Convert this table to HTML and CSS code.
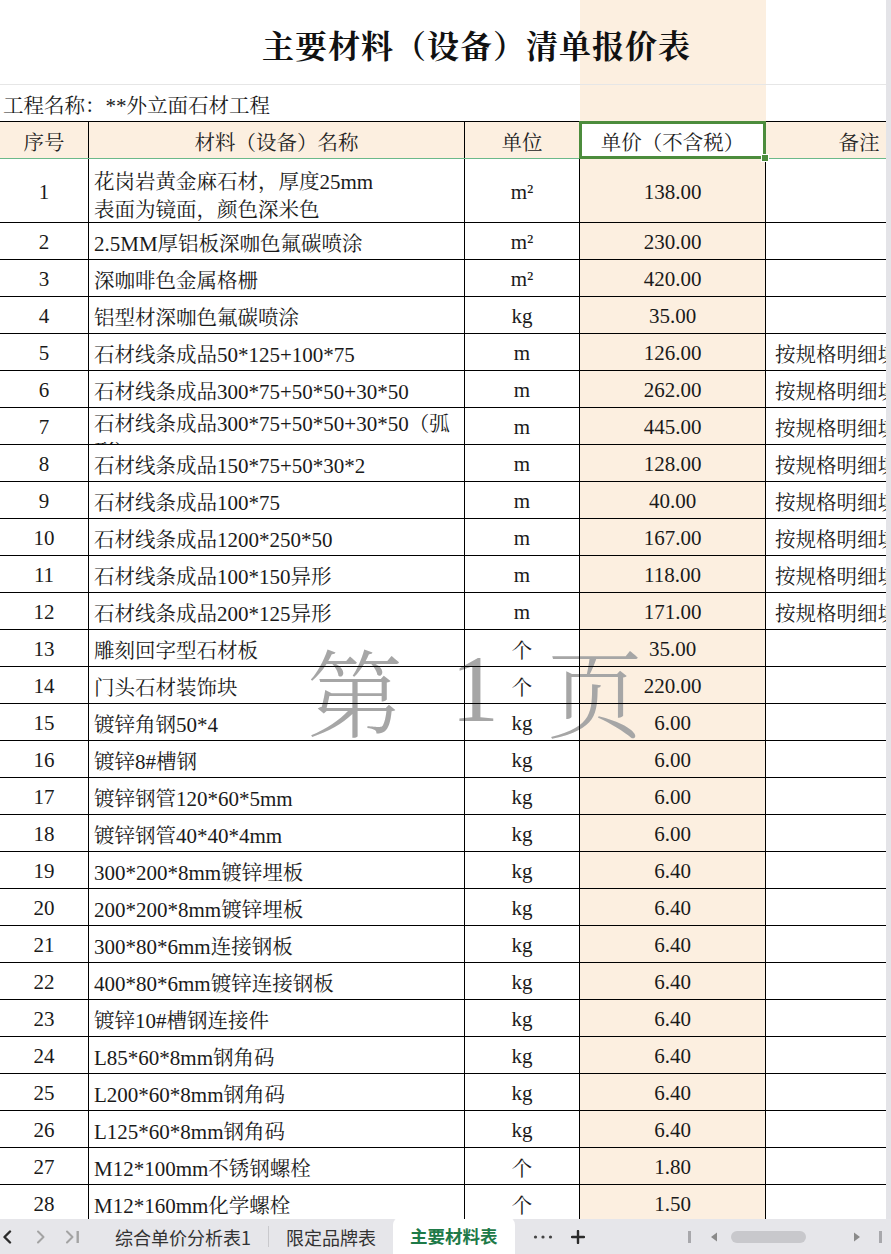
FILE: index.html
```html
<!DOCTYPE html>
<html lang="zh-CN">
<head>
<meta charset="utf-8">
<title>主要材料（设备）清单报价表</title>
<link rel="stylesheet" href="styles.css">
</head>
<body>
<div class="app">
  <div class="sheet">
    <div class="content">
      <div class="wm"><span>第</span><span class="wm-n">1</span><span>页</span></div>
      <div class="title-row"><h1 class="title">主要材料（设备）清单报价表</h1></div>
      <div class="proj">工程名称：<span class="l">**</span>外立面石材工程</div>
      <div class="grid">
        <div class="row head">
          <div class="c c1">序号</div>
          <div class="c c2 ctr">材料（设备）名称</div>
          <div class="c c3">单位</div>
          <div class="c c4 selcell">单价（不含税）<span class="sel"><span class="handle"></span></span></div>
          <div class="c c5">备注</div>
        </div>
        <div class="row tall">
          <div class="c c1 l">1</div>
          <div class="c c2 wrap">花岗岩黄金麻石材，厚度<span class="l">25mm</span><br>表面为镜面，颜色深米色</div>
          <div class="c c3 l">m²</div>
          <div class="c c4 l">138.00</div>
          <div class="c c5"></div>
        </div>
        <div class="row"><div class="c c1 l">2</div><div class="c c2"><span class="l">2.5MM</span>厚铝板深咖色氟碳喷涂</div><div class="c c3 l">m²</div><div class="c c4 l">230.00</div><div class="c c5"></div></div>
        <div class="row"><div class="c c1 l">3</div><div class="c c2">深咖啡色金属格栅</div><div class="c c3 l">m²</div><div class="c c4 l">420.00</div><div class="c c5"></div></div>
        <div class="row"><div class="c c1 l">4</div><div class="c c2">铝型材深咖色氟碳喷涂</div><div class="c c3 l">kg</div><div class="c c4 l">35.00</div><div class="c c5"></div></div>
        <div class="row"><div class="c c1 l">5</div><div class="c c2">石材线条成品<span class="l">50*125+100*75</span></div><div class="c c3 l">m</div><div class="c c4 l">126.00</div><div class="c c5 note">按规格明细填报</div></div>
        <div class="row"><div class="c c1 l">6</div><div class="c c2">石材线条成品<span class="l">300*75+50*50+30*50</span></div><div class="c c3 l">m</div><div class="c c4 l">262.00</div><div class="c c5 note">按规格明细填报</div></div>
        <div class="row"><div class="c c1 l">7</div><div class="c c2 over">石材线条成品<span class="l">300*75+50*50+30*50</span>（弧形）</div><div class="c c3 l">m</div><div class="c c4 l">445.00</div><div class="c c5 note">按规格明细填报</div></div>
        <div class="row"><div class="c c1 l">8</div><div class="c c2">石材线条成品<span class="l">150*75+50*30*2</span></div><div class="c c3 l">m</div><div class="c c4 l">128.00</div><div class="c c5 note">按规格明细填报</div></div>
        <div class="row"><div class="c c1 l">9</div><div class="c c2">石材线条成品<span class="l">100*75</span></div><div class="c c3 l">m</div><div class="c c4 l">40.00</div><div class="c c5 note">按规格明细填报</div></div>
        <div class="row"><div class="c c1 l">10</div><div class="c c2">石材线条成品<span class="l">1200*250*50</span></div><div class="c c3 l">m</div><div class="c c4 l">167.00</div><div class="c c5 note">按规格明细填报</div></div>
        <div class="row"><div class="c c1 l">11</div><div class="c c2">石材线条成品<span class="l">100*150</span>异形</div><div class="c c3 l">m</div><div class="c c4 l">118.00</div><div class="c c5 note">按规格明细填报</div></div>
        <div class="row"><div class="c c1 l">12</div><div class="c c2">石材线条成品<span class="l">200*125</span>异形</div><div class="c c3 l">m</div><div class="c c4 l">171.00</div><div class="c c5 note">按规格明细填报</div></div>
        <div class="row"><div class="c c1 l">13</div><div class="c c2">雕刻回字型石材板</div><div class="c c3">个</div><div class="c c4 l">35.00</div><div class="c c5"></div></div>
        <div class="row"><div class="c c1 l">14</div><div class="c c2">门头石材装饰块</div><div class="c c3">个</div><div class="c c4 l">220.00</div><div class="c c5"></div></div>
        <div class="row"><div class="c c1 l">15</div><div class="c c2">镀锌角钢<span class="l">50*4</span></div><div class="c c3 l">kg</div><div class="c c4 l">6.00</div><div class="c c5"></div></div>
        <div class="row"><div class="c c1 l">16</div><div class="c c2">镀锌<span class="l">8#</span>槽钢</div><div class="c c3 l">kg</div><div class="c c4 l">6.00</div><div class="c c5"></div></div>
        <div class="row"><div class="c c1 l">17</div><div class="c c2">镀锌钢管<span class="l">120*60*5mm</span></div><div class="c c3 l">kg</div><div class="c c4 l">6.00</div><div class="c c5"></div></div>
        <div class="row"><div class="c c1 l">18</div><div class="c c2">镀锌钢管<span class="l">40*40*4mm</span></div><div class="c c3 l">kg</div><div class="c c4 l">6.00</div><div class="c c5"></div></div>
        <div class="row"><div class="c c1 l">19</div><div class="c c2"><span class="l">300*200*8mm</span>镀锌埋板</div><div class="c c3 l">kg</div><div class="c c4 l">6.40</div><div class="c c5"></div></div>
        <div class="row"><div class="c c1 l">20</div><div class="c c2"><span class="l">200*200*8mm</span>镀锌埋板</div><div class="c c3 l">kg</div><div class="c c4 l">6.40</div><div class="c c5"></div></div>
        <div class="row"><div class="c c1 l">21</div><div class="c c2"><span class="l">300*80*6mm</span>连接钢板</div><div class="c c3 l">kg</div><div class="c c4 l">6.40</div><div class="c c5"></div></div>
        <div class="row"><div class="c c1 l">22</div><div class="c c2"><span class="l">400*80*6mm</span>镀锌连接钢板</div><div class="c c3 l">kg</div><div class="c c4 l">6.40</div><div class="c c5"></div></div>
        <div class="row"><div class="c c1 l">23</div><div class="c c2">镀锌<span class="l">10#</span>槽钢连接件</div><div class="c c3 l">kg</div><div class="c c4 l">6.40</div><div class="c c5"></div></div>
        <div class="row"><div class="c c1 l">24</div><div class="c c2"><span class="l">L85*60*8mm</span>钢角码</div><div class="c c3 l">kg</div><div class="c c4 l">6.40</div><div class="c c5"></div></div>
        <div class="row"><div class="c c1 l">25</div><div class="c c2"><span class="l">L200*60*8mm</span>钢角码</div><div class="c c3 l">kg</div><div class="c c4 l">6.40</div><div class="c c5"></div></div>
        <div class="row"><div class="c c1 l">26</div><div class="c c2"><span class="l">L125*60*8mm</span>钢角码</div><div class="c c3 l">kg</div><div class="c c4 l">6.40</div><div class="c c5"></div></div>
        <div class="row"><div class="c c1 l">27</div><div class="c c2"><span class="l">M12*100mm</span>不锈钢螺栓</div><div class="c c3">个</div><div class="c c4 l">1.80</div><div class="c c5"></div></div>
        <div class="row"><div class="c c1 l">28</div><div class="c c2"><span class="l">M12*160mm</span>化学螺栓</div><div class="c c3">个</div><div class="c c4 l">1.50</div><div class="c c5"></div></div>
      </div>
    </div>
    <div class="vstrip"></div>
  </div>
  <div class="tabs">
    <div class="nav">
      <svg class="ic ic-prev" width="10" height="14" viewBox="0 0 10 14"><path d="M8 1.5 L2.5 7 L8 12.5" fill="none" stroke="#2b2b2b" stroke-width="2.4" stroke-linecap="round" stroke-linejoin="round"/></svg>
      <svg class="ic ic-next" width="10" height="14" viewBox="0 0 10 14"><path d="M2 1.5 L7.5 7 L2 12.5" fill="none" stroke="#a3a3a3" stroke-width="2" stroke-linecap="round" stroke-linejoin="round"/></svg>
      <svg class="ic ic-last" width="16" height="14" viewBox="0 0 16 14"><path d="M2 1.5 L7.5 7 L2 12.5" fill="none" stroke="#a3a3a3" stroke-width="2" stroke-linecap="round" stroke-linejoin="round"/><rect x="11.5" y="1" width="2.4" height="12" fill="#a3a3a3"/></svg>
    </div>
    <div class="tab">综合单价分析表1</div>
    <div class="tab-sep"></div>
    <div class="tab">限定品牌表</div>
    <div class="tab active">主要材料表</div>
    <svg class="more" width="20" height="6" viewBox="0 0 20 6"><circle cx="2.5" cy="3" r="1.6" fill="#444"/><circle cx="10" cy="3" r="1.6" fill="#444"/><circle cx="17.5" cy="3" r="1.6" fill="#444"/></svg>
    <svg class="plus" width="14" height="14" viewBox="0 0 14 14"><path d="M7 1 V13 M1 7 H13" stroke="#2b2b2b" stroke-width="2.4" stroke-linecap="round"/></svg>
    <div class="hscroll">
      <span class="bar"></span>
      <svg width="8" height="10" viewBox="0 0 8 10"><path d="M7 0.5 V9.5 L1 5 Z" fill="#8a8a8a"/></svg>
      <span class="thumb"></span>
      <svg class="rt" width="8" height="10" viewBox="0 0 8 10"><path d="M1 0.5 V9.5 L7 5 Z" fill="#8a8a8a"/></svg>
      <span class="bar bar-r"></span>
    </div>
  </div>
</div>
</body>
</html>
```

FILE: styles.css
```css
html, body {
  margin: 0;
  padding: 0;
  background: #fff;
  overflow: hidden;
}

.app {
  width: 891px;
  height: 1254px;
  display: flex;
  flex-direction: column;
  font-family: "Noto Serif CJK SC", "Noto Sans CJK SC", serif;
  color: #1a1a1a;
}

.sheet {
  display: flex;
  height: 1219px;
  overflow: hidden;
  flex: none;
}

.content {
  position: relative;
  width: 886px;
  flex: none;
  overflow: hidden;
  background: linear-gradient(to right, #fff 0, #fff 580px, #fcefe0 580px, #fcefe0 766px, #fff 766px);
}

.vstrip {
  flex: 1;
  background: #e4e4e8;
}

/* watermark */
.wm {
  position: absolute;
  left: 295px;
  top: 641px;
  z-index: 0;
  display: flex;
  font-family: "Noto Serif CJK SC", "Liberation Serif", "Noto Sans CJK SC", serif;
  font-size: 96px;
  line-height: 96px;
  font-weight: 300;
  color: #a6a6a6;
}
.wm span {
  width: 120px;
  text-align: center;
}
.wm .wm-n {
  font-family: "Liberation Serif", serif;
  font-weight: 400;
}

.title-row {
  position: relative;
  z-index: 1;
  height: 85px;
  box-sizing: border-box;
  border-bottom: 1px solid #e6e6e6;
  padding-top: 23px;
  padding-left: 262px;
}
.title {
  margin: 0;
  font-size: 32px;
  line-height: 42px;
  font-weight: 700;
  letter-spacing: 1px;
  color: #111;
  white-space: nowrap;
}

.proj {
  position: relative;
  z-index: 1;
  height: 36px;
  box-sizing: border-box;
  padding-left: 3px;
  padding-top: 2px;
  line-height: 34px;
  font-size: 20.5px;
  white-space: nowrap;
}

.l {
  font-family: "Liberation Serif", serif;
  font-size: 21px;
}

.grid {
  position: relative;
  z-index: 1;
  width: 952px;
}

.row {
  display: grid;
  grid-template-columns: 89px 376px 115px 186px 186px;
  height: 37px;
  box-sizing: border-box;
  border-bottom: 1px solid #000;
  font-size: 20.5px;
}
.row.head {
  height: 38px;
  border-top: 1px solid #000;
  border-bottom: 1px solid #6cb98a;
  background: #fcefe0;
  color: #222;
}
.row.tall {
  height: 64px;
}

.c {
  box-sizing: border-box;
  border-right: 1px solid #000;
  text-align: center;
  padding-top: 3px;
  line-height: 33px;
  white-space: nowrap;
  overflow: hidden;
  min-width: 0;
}
.row.tall .c {
  line-height: 60px;
}
.c2 {
  text-align: left;
  padding-left: 5px;
}
.c2.ctr {
  text-align: center;
  padding-left: 0;
}
.c5 {
  border-right: none;
}
.c5.note {
  text-align: left;
  padding-left: 9px;
}

.row.tall .wrap {
  white-space: normal;
  line-height: 26px;
  padding-top: 8px;
}

.over {
  white-space: normal;
  line-height: 26px;
  padding-top: 1px;
  padding-right: 4px;
}

.selcell {
  position: relative;
  overflow: visible;
  background: #fff;
}
.sel {
  position: absolute;
  left: -1px;
  top: -1px;
  right: -1px;
  bottom: -1px;
  border: 3px solid #4c8c3c;
  box-sizing: border-box;
}
.handle {
  position: absolute;
  right: -6px;
  bottom: -6px;
  width: 6px;
  height: 6px;
  background: #4c8c3c;
  border: 1px solid #fff;
}

/* sheet tabs */
.tabs {
  height: 35px;
  flex: none;
  display: flex;
  align-items: stretch;
  background: #e6e6ea;
  font-family: "Noto Sans CJK SC", sans-serif;
  font-size: 18px;
  color: #333;
}
.nav {
  width: 98px;
  display: flex;
  align-items: center;
  padding-left: 2px;
  box-sizing: border-box;
}
.ic-prev { margin-right: 24px; }
.ic-next { margin-right: 19px; }

.tab {
  display: flex;
  align-items: center;
  padding: 0 17px;
  white-space: nowrap;
}
.tab-sep {
  width: 1px;
  background: #c9c9cd;
  margin: 7px 0;
}
.tab.active {
  background: #fff;
  border-radius: 8px 8px 0 0;
  margin-top: -2px;
  color: #1e7a48;
  font-weight: 700;
  font-size: 17.5px;
}
.more {
  align-self: center;
  margin-left: 18px;
}
.plus {
  align-self: center;
  margin-left: 18px;
}
.hscroll {
  margin-left: auto;
  display: flex;
  align-items: center;
  padding-right: 9px;
}
.hscroll .bar {
  width: 3px;
  height: 12px;
  background: #a8a8ac;
  margin-right: 19px;
}
.hscroll .thumb {
  width: 75px;
  height: 12px;
  border-radius: 6px;
  background: #c8c8cc;
  margin-left: 13px;
  margin-right: 47px;
}
.hscroll .rt {
  margin-right: 18px;
}
.hscroll .bar-r {
  margin-right: 0;
}
```
